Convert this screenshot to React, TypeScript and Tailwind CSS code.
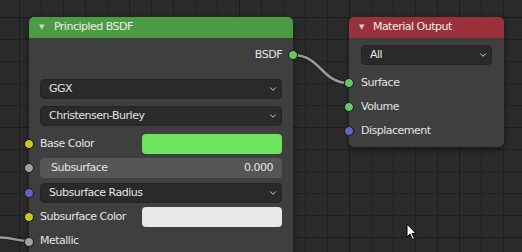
import { ChevronDown } from "lucide-react";

const font = "font-['DejaVu_Sans',sans-serif]";

function Socket({ color, side }: { color: string; side: "left" | "right" }) {
  return (
    <span
      className={`absolute top-1/2 -translate-y-1/2 w-[10px] h-[10px] rounded-full border border-[#1a1a1a] ${color} ${
        side === "left" ? "-left-[16px]" : "-right-[16px]"
      }`}
    />
  );
}

function Dropdown({ label }: { label: string }) {
  return (
    <div className="h-5 flex items-center justify-between rounded-[4px] bg-[#2a2a2a] border border-[#242424] pl-2 pr-[3px]">
      <span>{label}</span>
      <ChevronDown size={10} strokeWidth={2.2} className="text-[#dcdcdc]" />
    </div>
  );
}

function Header({ title, color, gap }: { title: string; color: string; gap: string }) {
  return (
    <div className={`h-[21px] flex items-center pl-[10px] rounded-t-[5px] ${gap} ${color}`}>
      <span className="text-[7px] text-[#d0d0d0] leading-none">▼</span>
      <span className="text-[#ececec]">{title}</span>
    </div>
  );
}

function PrincipledNode() {
  return (
    <div className="absolute left-[29px] top-[17px] w-[264px] h-[250px] rounded-[5px] bg-[#3f3f3f] shadow-[0_2px_6px_rgba(0,0,0,0.45)]">
      <Header title="Principled BSDF" color="bg-[#4b9b45]" gap="gap-[10px]" />
      <div className="flex flex-col px-[11px] pt-[7px]">
        <div className="relative h-5 flex items-center justify-end">
          BSDF
          <Socket color="bg-[#63c763]" side="right" />
        </div>
        <div className="mt-[14px] flex flex-col gap-[7px]">
          <Dropdown label="GGX" />
          <Dropdown label="Christensen-Burley" />
        </div>
        <div className="mt-2 flex flex-col gap-[4.4px]">
          <div className="relative h-5 flex items-center">
            <Socket color="bg-[#c7c729]" side="left" />
            <span className="flex-1">Base Color</span>
            <div className="w-[140px] h-5 rounded-[4px] bg-[#6ee35e]" />
          </div>
          <div className="relative h-5 flex items-center justify-between rounded-[4px] bg-[#565656] pl-[11px] pr-[9px]">
            <Socket color="bg-[#a1a1a1]" side="left" />
            <span>Subsurface</span>
            <span>0.000</span>
          </div>
          <div className="relative">
            <Socket color="bg-[#6363c7]" side="left" />
            <Dropdown label="Subsurface Radius" />
          </div>
          <div className="relative h-5 flex items-center">
            <Socket color="bg-[#c7c729]" side="left" />
            <span className="flex-1">Subsurface Color</span>
            <div className="w-[140px] h-5 rounded-[4px] bg-[#e8e8e8]" />
          </div>
          <div className="relative h-5 flex items-center">
            <Socket color="bg-[#a1a1a1]" side="left" />
            <span>Metallic</span>
          </div>
        </div>
      </div>
    </div>
  );
}

function MaterialOutputNode() {
  return (
    <div className="absolute left-[349px] top-[17px] w-[155px] rounded-[5px] bg-[#3f3f3f] shadow-[0_2px_6px_rgba(0,0,0,0.45)] pb-[6px]">
      <Header title="Material Output" color="bg-[#983139]" gap="gap-[9px]" />
      <div className="flex flex-col px-3 pt-[7px]">
        <Dropdown label="All" />
        <div className="mt-2 flex flex-col gap-1">
          {[
            ["Surface", "bg-[#63c763]"],
            ["Volume", "bg-[#63c763]"],
            ["Displacement", "bg-[#6363c7]"],
          ].map(([name, c]) => (
            <div key={name} className="relative h-5 flex items-center">
              <span className={`absolute top-1/2 -translate-y-1/2 -left-[17px] w-[10px] h-[10px] rounded-full border border-[#1a1a1a] ${c}`} />
              {name}
            </div>
          ))}
        </div>
      </div>
    </div>
  );
}

export default function App() {
  return (
    <div
      className={`relative w-[522px] h-[252px] overflow-hidden ${font} text-[11px] tracking-[-0.5px] text-[#e4e4e4] bg-[#2a2a2a] bg-[linear-gradient(to_right,#1c1c1c_1px,transparent_1px),linear-gradient(to_bottom,#1c1c1c_1px,transparent_1px),linear-gradient(to_right,#212121_1px,transparent_1px),linear-gradient(to_bottom,#212121_1px,transparent_1px)] bg-[size:110px_110px,110px_110px,22px_22px,22px_22px] bg-[position:19px_17px]`}
    >
      <svg className="absolute inset-0 pointer-events-none" width={522} height={252}>
        <path d="M293 55 C321 55 321 83 349 83" fill="none" stroke="#1e1e1e" strokeWidth={4.5} />
        <path d="M293 55 C321 55 321 83 349 83" fill="none" stroke="#9a9a9a" strokeWidth={2.5} />
        <path d="M-2 237.5 C14 237.5 16 241 29 241" fill="none" stroke="#1e1e1e" strokeWidth={4.5} />
        <path d="M-2 237.5 C14 237.5 16 241 29 241" fill="none" stroke="#9a9a9a" strokeWidth={2.5} />
      </svg>
      <PrincipledNode />
      <MaterialOutputNode />
      <svg className="absolute left-[406px] top-[223px]" width={12} height={18} viewBox="0 0 12 18">
        <path d="M1 1 L1 14 L4 11 L6.5 16.5 L8.5 15.5 L6 10.5 L10 10.5 Z" fill="#ffffff" stroke="#000000" strokeWidth={1} strokeLinejoin="round" />
      </svg>
    </div>
  );
}
